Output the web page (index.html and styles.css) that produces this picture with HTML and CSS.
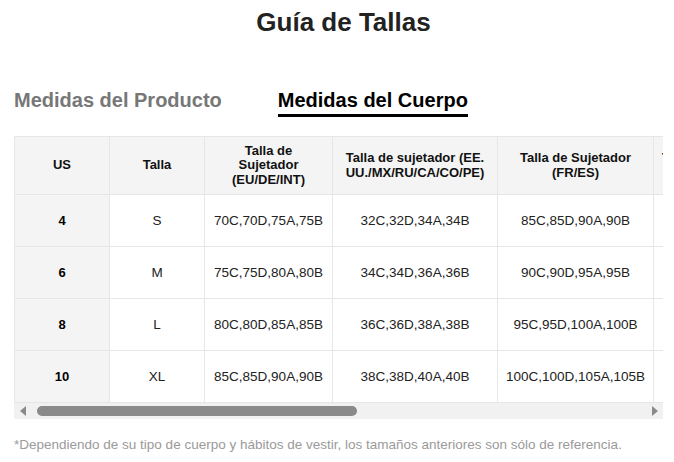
FILE: index.html
```html
<!DOCTYPE html>
<html lang="es">
<head>
<meta charset="utf-8">
<title>Guía de Tallas</title>
<link rel="stylesheet" href="styles.css">
</head>
<body>
<div class="page">
  <h1 class="title">Guía de Tallas</h1>
  <div class="tabs">
    <span class="tab">Medidas del Producto</span>
    <span class="tab active">Medidas del Cuerpo</span>
  </div>
  <div class="scroller">
    <table class="sizes">
      <colgroup>
        <col class="c1"><col class="c2"><col class="c3"><col class="c4"><col class="c5"><col class="c6"><col class="c7">
      </colgroup>
      <thead>
        <tr>
          <th>US</th>
          <th>Talla</th>
          <th>Talla de<br>Sujetador<br>(EU/DE/INT)</th>
          <th>Talla de sujetador (EE.<br>UU./MX/RU/CA/CO/PE)</th>
          <th>Talla de Sujetador<br>(FR/ES)</th>
          <th>Talla de Sujetador<br>(UK/AU)</th>
          <th>Talla de Sujetador<br>(IT)</th>
        </tr>
      </thead>
      <tbody>
        <tr><td class="first">4</td><td>S</td><td>70C,70D,75A,75B</td><td>32C,32D,34A,34B</td><td>85C,85D,90A,90B</td><td>32C,32D,34A,34B</td><td>1C,1D,2A,2B</td></tr>
        <tr><td class="first">6</td><td>M</td><td>75C,75D,80A,80B</td><td>34C,34D,36A,36B</td><td>90C,90D,95A,95B</td><td>34C,34D,36A,36B</td><td>2C,2D,3A,3B</td></tr>
        <tr><td class="first">8</td><td>L</td><td>80C,80D,85A,85B</td><td>36C,36D,38A,38B</td><td>95C,95D,100A,100B</td><td>36C,36D,38A,38B</td><td>3C,3D,4A,4B</td></tr>
        <tr><td class="first">10</td><td>XL</td><td>85C,85D,90A,90B</td><td>38C,38D,40A,40B</td><td>100C,100D,105A,105B</td><td>38C,38D,40A,40B</td><td>4C,4D,5A,5B</td></tr>
      </tbody>
    </table>
  </div>
  <div class="scrollbar">
    <span class="arrow left"></span>
    <span class="track"><span class="thumb"></span></span>
    <span class="arrow right"></span>
  </div>
  <p class="note">*Dependiendo de su tipo de cuerpo y hábitos de vestir, los tamaños anteriores son sólo de referencia.</p>
</div>
</body>
</html>
```

FILE: styles.css
```css
html, body {
  margin: 0;
  padding: 0;
  background: #ffffff;
}
body {
  font-family: "Liberation Sans", Arial, sans-serif;
  color: #000;
}
.page {
  padding: 0 11px 0 14px;
}
.title {
  margin: 0;
  padding: 6px 0 0 10px;
  height: 32px;
  line-height: 32px;
  font-size: 26px;
  font-weight: bold;
  text-align: center;
  color: #222;
}
.tabs {
  display: flex;
  gap: 56px;
  margin-top: 50px;
  height: 31px;
}
.tab {
  font-size: 20px;
  font-weight: bold;
  line-height: 25px;
  color: #777;
  height: 26px;
}
.tab.active {
  color: #000;
  border-bottom: 3px solid #000;
}
.scroller {
  margin-top: 17px;
  width: 649px;
  overflow: hidden;
}
.sizes {
  border-collapse: collapse;
  table-layout: fixed;
  width: 917px;
}
.c1 { width: 95px; }
.c2 { width: 95px; }
.c3 { width: 128px; }
.c4 { width: 165px; }
.c5 { width: 156px; }
.c6 { width: 128px; }
.c7 { width: 150px; }
.sizes th, .sizes td {
  border: 1px solid #e6e6e6;
  text-align: center;
  padding: 0 4px;
}
.sizes th {
  background: #f4f4f4;
  font-size: 13px;
  font-weight: bold;
  line-height: 14.5px;
  height: 57px;
  color: #111;
}
.sizes td {
  height: 51px;
  font-size: 13.5px;
  color: #222;
}
.sizes td.first {
  background: #f4f4f4;
  font-weight: bold;
  font-size: 13px;
  color: #000;
}
.scrollbar {
  display: flex;
  align-items: center;
  width: 649px;
  height: 16px;
  background: #f1f1f1;
}
.arrow {
  width: 0;
  height: 0;
  border-top: 5px solid transparent;
  border-bottom: 5px solid transparent;
}
.arrow.left {
  margin-left: 6px;
  border-right: 6px solid #8a8a8a;
}
.arrow.right {
  margin-right: 5px;
  border-left: 6px solid #8a8a8a;
}
.track {
  flex: 1;
  display: flex;
  padding: 0 4px 0 11px;
}
.thumb {
  width: 320px;
  height: 10px;
  border-radius: 5px;
  background: #8a8a8a;
}
.note {
  margin: 18px 0 0;
  font-size: 13.5px;
  color: #9a9a9a;
}
```
